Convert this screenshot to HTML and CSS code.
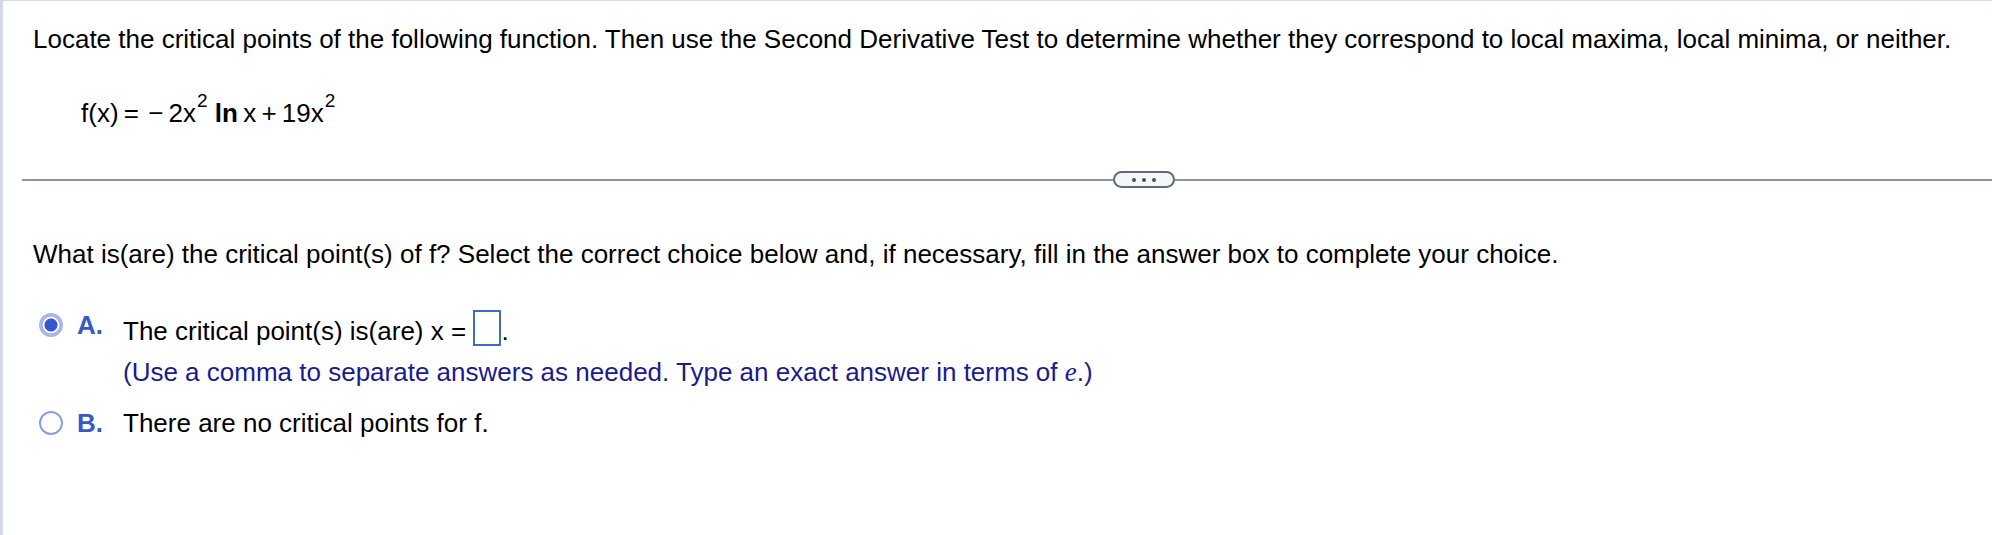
FILE: index.html
```html
<!DOCTYPE html>
<html lang="en">
<head>
    <meta charset="UTF-8">
    <meta name="viewport" content="width=device-width, initial-scale=1.0">
    <title>Critical Points</title>
    <link rel="stylesheet" href="styles.css">
</head>
<body>
    <div class="page">
        <div class="question">
            <p class="intro">Locate the critical points of the following function. Then use the Second Derivative Test to determine whether they correspond to local maxima, local minima, or neither.</p>
            <div class="formula">f(x) = <span class="op">&minus;</span> 2x<sup>2</sup> <b>ln</b> x + 19x<sup>2</sup></div>
        </div>

        <div class="divider">
            <span class="rule rule-left"></span>
            <button class="more" aria-label="More"><i></i><i></i><i></i></button>
            <span class="rule"></span>
        </div>

        <div class="answer">
            <p class="prompt">What is(are) the critical point(s) of f? Select the correct choice below and, if necessary, fill in the answer box to complete your choice.</p>

            <div class="choice">
                <span class="radio checked"></span>
                <span class="choice-letter">A.</span>
                <div class="choice-body">
                    <div class="choice-text">The critical point(s) is(are) x = <span class="answer-box"></span>.</div>
                    <div class="hint">(Use a comma to separate answers as needed. Type an exact answer in terms of <i class="math-e">e</i>.)</div>
                </div>
            </div>

            <div class="choice">
                <span class="radio"></span>
                <span class="choice-letter">B.</span>
                <div class="choice-body">
                    <div class="choice-text">There are no critical points for f.</div>
                </div>
            </div>
        </div>
    </div>
</body>
</html>
```

FILE: styles.css
```css
:root {
    --frame-color: #d4dae5;
    --rule-color: #8a939f;
    --letter-color: #3a57c8;
    --hint-color: #1b1b8c;
    --box-color: #3d6cc6;
}

* {
    margin: 0;
    padding: 0;
    box-sizing: border-box;
}

body {
    font-family: 'Liberation Sans', Arial, sans-serif;
    font-size: 26px;
    color: #000;
    background: #fff;
}

.page {
    min-height: 535px;
    border-top: 1px solid var(--frame-color);
    border-left: 3px solid var(--frame-color);
}

.question {
    padding: 23px 0 0 30px;
}

.intro {
    line-height: 30px;
}

.formula {
    margin: 44px 0 0 48px;
    line-height: 30px;
    word-spacing: -2px;
}

.formula .op {
    margin-left: 4px;
}

.formula sup {
    font-size: 19px;
    line-height: 0;
    vertical-align: 15px;
    margin-left: 1px;
}

.formula b {
    margin-left: 2px;
}

.divider {
    display: flex;
    align-items: center;
    margin-top: 43px;
    padding-left: 19px;
}

.rule {
    flex: 1;
    height: 2px;
    background: var(--rule-color);
}

.rule-left {
    flex: 0 0 1091px;
}

.more {
    display: flex;
    justify-content: center;
    align-items: center;
    gap: 6px;
    width: 62px;
    height: 17px;
    border: 2px solid #5f6b7b;
    border-radius: 9px;
    background: #f4f5f7;
}

.more i {
    width: 4px;
    height: 4px;
    border-radius: 50%;
    background: #4a4f57;
}

.answer {
    padding: 51px 0 0 30px;
}

.prompt {
    line-height: 30px;
}

.choice {
    display: flex;
    align-items: flex-start;
    margin-top: 41px;
    padding-left: 6px;
}

.choice + .choice {
    margin-top: 21px;
}

.radio {
    flex: none;
    width: 24px;
    height: 24px;
    margin-top: 3px;
    border: 2px solid #8d9ee2;
    border-radius: 50%;
    background: #fff;
}

.radio.checked {
    border: 3px solid #a9b6ec;
    background: radial-gradient(circle, #3655cf 0 6px, #fff 7px 8px, #7d8fdf 9px);
}

.choice-letter {
    flex: none;
    width: 46px;
    margin-left: 14px;
    font-weight: bold;
    color: var(--letter-color);
    line-height: 30px;
}

.choice-body {
    line-height: 30px;
}

.answer-box {
    display: inline-block;
    width: 28px;
    height: 36px;
    vertical-align: -6px;
    border: 2px solid var(--box-color);
    background: #fff;
}

.hint {
    margin-top: 11px;
    color: var(--hint-color);
}

.math-e {
    font-family: 'Liberation Serif', 'Times New Roman', serif;
    font-size: 27px;
}
```
